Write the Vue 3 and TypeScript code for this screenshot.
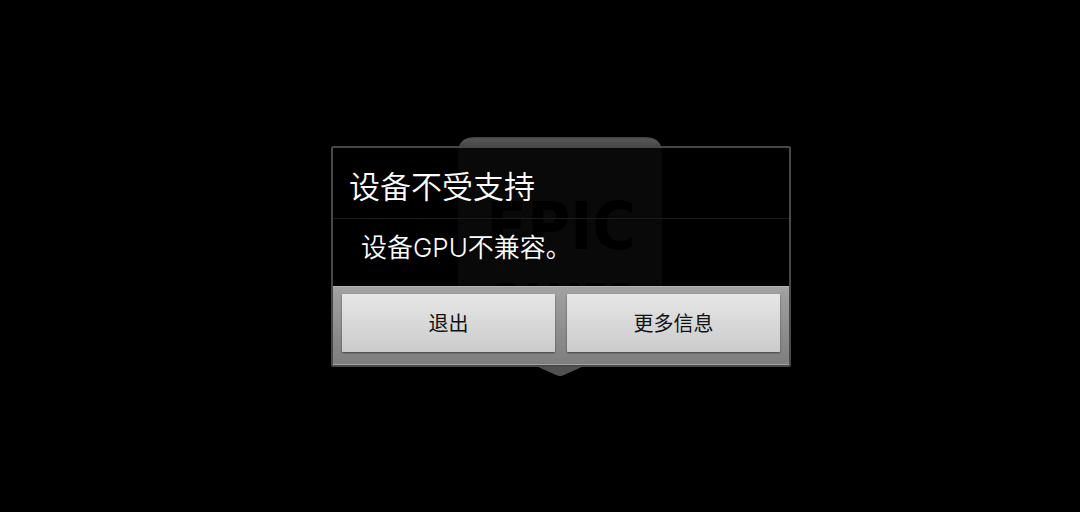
<script setup lang="ts">
interface Action {
  id: string
  label: string
}

const title = '设备不受支持'
const message = '设备GPU不兼容。'
const actions: Action[] = [
  { id: 'quit', label: '退出' },
  { id: 'more', label: '更多信息' },
]
</script>

<template>
  <main class="screen">
    <div class="stage">
      <svg class="logo" viewBox="0 0 204 240" aria-hidden="true">
        <defs>
          <linearGradient id="shield" x1="0" y1="0" x2="0" y2="1">
            <stop offset="0" stop-color="#404241" />
            <stop offset="0.01" stop-color="#555756" />
            <stop offset="0.035" stop-color="#484a49" />
            <stop offset="1" stop-color="#505251" />
          </linearGradient>
        </defs>
        <path
          d="M16 0H188Q200 0 204 11V200Q204 211 194 214L126 229L106 238Q102 240 98 238L78 229L10 214Q0 211 0 200V11Q4 0 16 0Z"
          fill="url(#shield)"
        />
        <text class="mark" x="103" y="112" font-size="66">EPIC</text>
        <text class="mark" x="103" y="176" font-size="40">GAMES</text>
      </svg>

      <section class="dialog" role="alertdialog" aria-labelledby="title" aria-describedby="message">
        <h1 id="title" class="title">{{ title }}</h1>
        <p id="message" class="message">{{ message }}</p>
        <footer class="actions">
          <button v-for="action in actions" :key="action.id" type="button" class="action">
            {{ action.label }}
          </button>
        </footer>
      </section>
    </div>
  </main>
</template>

<style>
body {
  background: #000;
}
</style>

<style scoped>
.screen {
  box-sizing: border-box;
  min-height: 100vh;
  padding-left: 42px;
  display: flex;
  align-items: center;
  justify-content: center;
  background: #000;
  font-family: Inter, "Noto Sans CJK SC", sans-serif;
}

.stage {
  position: relative;
  width: 460px;
  max-width: 100%;
}

.logo {
  position: absolute;
  top: -9px;
  left: 127px;
  width: 204px;
  height: 240px;
}

.mark {
  font-family: "Liberation Sans Narrow", "DejaVu Sans Condensed", sans-serif;
  font-weight: 700;
  text-anchor: middle;
  fill: #000;
}

.dialog {
  position: relative;
  box-sizing: border-box;
  border: 2px solid #484848;
  border-radius: 2px;
  background: rgba(0, 0, 0, 0.88);
  color: #fff;
}

.title {
  margin: 0;
  padding: 19px 16px 11px;
  border-bottom: 1px solid #1c1c1c;
  font-size: 31px;
  line-height: 40px;
  font-weight: 350;
}

.message {
  margin: 0;
  padding: 13px 28px 22px;
  font-size: 26px;
  line-height: 32px;
  font-weight: 350;
}

.actions {
  display: flex;
  gap: 12px;
  padding: 7px 9px 12px;
  border-top: 1px solid #b4b4b4;
  border-bottom: 1px solid #a2a2a2;
  background: linear-gradient(#a2a2a2, #7e7e7e);
}

.action {
  flex: 1;
  height: 58px;
  padding: 2px 0 0;
  border: 0;
  border-radius: 1px;
  background: linear-gradient(#e6e6e6, #cbcbcb);
  box-shadow: 0 1px 2px rgba(0, 0, 0, 0.5);
  color: #111;
  font: inherit;
  font-size: 20px;
  line-height: 28px;
}
</style>
